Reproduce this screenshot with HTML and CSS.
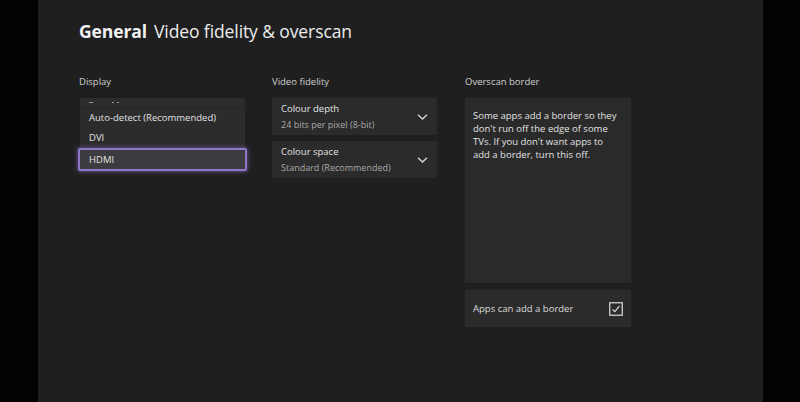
FILE: index.html
```html
<!DOCTYPE html>
<html lang="en">
<head>
<meta charset="utf-8">
<title>General - Video fidelity &amp; overscan</title>
<link rel="stylesheet" href="styles.css">
</head>
<body>
<div class="frame">
  <div class="bar"></div>
  <main class="screen">
    <h1 class="title"><span class="title-main">General</span><span class="title-sub">Video fidelity &amp; overscan</span></h1>
    <div class="columns">
      <section class="col col-display">
        <div class="label">Display</div>
        <div class="dropdown">
          <div class="clip"><i class="mark m1"></i><i class="mark m2"></i><i class="mark m3"></i></div>
          <div class="option">Auto-detect (Recommended)</div>
          <div class="option">DVI</div>
          <div class="option focused">HDMI</div>
        </div>
      </section>
      <section class="col col-video">
        <div class="label">Video fidelity</div>
        <div class="select">
          <div class="select-text">
            <div class="select-name">Colour depth</div>
            <div class="select-value">24 bits per pixel (8-bit)</div>
          </div>
          <svg class="chev" viewBox="0 0 11 6" width="11" height="6"><path d="M1 0.8 L5.5 5 L10 0.8" fill="none" stroke="#d8d8d8" stroke-width="1.3"/></svg>
        </div>
        <div class="select">
          <div class="select-text">
            <div class="select-name">Colour space</div>
            <div class="select-value">Standard (Recommended)</div>
          </div>
          <svg class="chev" viewBox="0 0 11 6" width="11" height="6"><path d="M1 0.8 L5.5 5 L10 0.8" fill="none" stroke="#d8d8d8" stroke-width="1.3"/></svg>
        </div>
      </section>
      <section class="col col-overscan">
        <div class="label">Overscan border</div>
        <div class="info">Some apps add a border so they don't run off the edge of some TVs. If you don't want apps to add a border, turn this off.</div>
        <div class="check-row">
          <span>Apps can add a border</span>
          <svg class="checkbox" viewBox="0 0 14 14" width="14" height="14"><rect x="0.75" y="0.75" width="12.5" height="12.5" fill="none" stroke="#d0d0d0" stroke-width="1.3"/><path d="M3.6 7.4 L5.8 9.6 L10.4 4.2" fill="none" stroke="#e0e0e0" stroke-width="1.2"/></svg>
        </div>
      </section>
    </div>
  </main>
  <div class="bar"></div>
</div>
</body>
</html>
```
FILE: styles.css
```css
html, body {
  margin: 0;
  padding: 0;
  background: #000;
}
body {
  font-family: "Open Sans", "Noto Sans", "Liberation Sans", sans-serif;
  color: #e6e6e6;
}
.frame {
  display: flex;
  width: 800px;
  height: 402px;
  overflow: hidden;
}
.bar {
  width: 38px;
  flex: none;
  background: #020202;
}
.bar:last-child {
  width: 37px;
}
.screen {
  flex: 1;
  background: #1f1f1f;
  padding: 17px 0 0 41px;
}
.title {
  margin: 0;
  font-size: 17.5px;
  font-weight: 400;
  line-height: 28px;
  letter-spacing: -0.1px;
  color: #f2f2f2;
}
.title-main {
  font-weight: 700;
  margin-right: 7px;
}
.title-sub {
  color: #ececec;
}
.columns {
  display: grid;
  grid-template-columns: 167px 165px 168px;
  column-gap: 26px;
  margin-top: 30px;
}
.col-overscan {
  margin-left: 2px;
}
.label {
  font-size: 9.5px;
  line-height: 14px;
  color: #cfcfcf;
  height: 14px;
  margin-bottom: 9px;
}
.dropdown {
  margin: 1px 1px 0 1px;
  background: #2c2c2c;
  padding-bottom: 1px;
}
.clip {
  height: 10px;
  display: flex;
  align-items: flex-end;
  gap: 3px;
  padding-left: 9px;
  border-bottom: 1px solid #262626;
  box-sizing: border-box;
}
.mark {
  display: block;
  height: 1px;
  background: #9a9a9a;
  margin-bottom: 4px;
}
.m1 { width: 4px; }
.m2 { width: 2px; margin-left: 16px; }
.m3 { width: 2px; }
.option {
  font-size: 9.5px;
  line-height: 20px;
  height: 20px;
  padding-left: 9px;
  color: #e2e2e2;
}
.option.focused {
  margin: 0 -2px;
  height: 19px;
  line-height: 19px;
  padding-left: 9px;
  background: #3c3b3f;
  border: 2px solid #8e76c9;
  border-radius: 2px;
  box-shadow: 0 0 4px 1px rgba(140, 110, 210, 0.5);
}
.select {
  display: flex;
  align-items: center;
  justify-content: space-between;
  background: #2b2b2b;
  height: 37px;
  padding: 0 8px 0 9px;
  margin-bottom: 6px;
}
.select-name {
  font-size: 9.5px;
  line-height: 16px;
  color: #e4e4e4;
}
.select-value {
  font-size: 9px;
  line-height: 15px;
  color: #a9a9a9;
}
.chev {
  display: block;
  margin-right: 1px;
}
.info {
  background: #2a2a2a;
  padding: 11px 12px 0 8px;
  font-size: 9.5px;
  line-height: 13px;
  color: #e2e2e2;
  height: 174px;
}
.check-row {
  margin-top: 7px;
  background: #2b2b2b;
  height: 37px;
  display: flex;
  align-items: center;
  justify-content: space-between;
  padding: 0 8px 0 8px;
  font-size: 9.5px;
  color: #dcdcdc;
}
.checkbox {
  display: block;
}
```
